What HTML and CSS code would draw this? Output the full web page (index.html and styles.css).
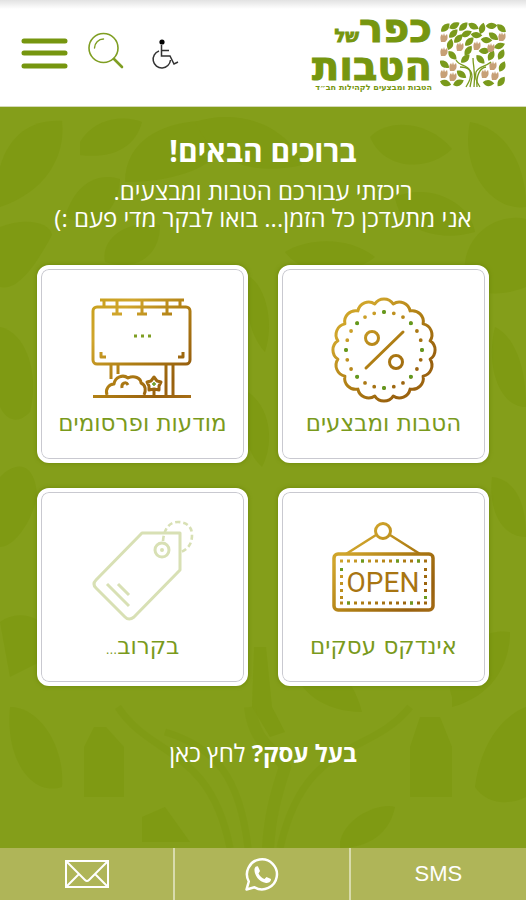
FILE: index.html
```html
<!DOCTYPE html>
<html lang="he" dir="rtl">
<head>
  <meta charset="UTF-8">
  <meta name="viewport" content="width=device-width, initial-scale=1.0">
  <title>כפר של הטבות</title>
  <link rel="stylesheet" href="styles.css">
</head>
<body>
  <header class="header">
    <a class="logo" href="#">
      <svg class="logo-tree" viewBox="0 0 66 66" aria-hidden="true">
        <defs>
          <path id="leaf" d="M-4 3.500C-4-2-1-4.500 4.500-4.500C4.500 1 2 4.500-4 3.500Z"/>
          <path id="hand" d="M-3 4C-4 0-4-2-2-4L-1-2L0-5L1-2L3-4C4-1 4 2 1 4Z"/>
        </defs>
        <g fill="#7a9a1c">
          <use href="#leaf" x="5" y="6"/><use href="#leaf" x="14" y="4" transform="rotate(15 14 4)"/>
          <use href="#leaf" x="23" y="5"/><use href="#leaf" x="33" y="4" transform="rotate(70 33 4)"/>
          <use href="#leaf" x="42" y="7" transform="rotate(-30 42 7)"/><use href="#leaf" x="51" y="4" transform="rotate(40 51 4)"/>
          <use href="#leaf" x="61" y="6" transform="rotate(85 61 6)"/><use href="#leaf" x="13" y="12"/>
          <use href="#leaf" x="26" y="12" transform="rotate(20 26 12)"/><use href="#leaf" x="36" y="13" transform="rotate(50 36 13)"/>
          <use href="#leaf" x="18" y="17"/><use href="#leaf" x="53" y="14" transform="rotate(80 53 14)"/>
          <use href="#leaf" x="10" y="23" transform="rotate(-30 10 23)"/><use href="#leaf" x="29" y="20"/>
          <use href="#leaf" x="46" y="18" transform="rotate(50 46 18)"/><use href="#leaf" x="59" y="24" transform="rotate(25 59 24)"/>
          <use href="#leaf" x="28" y="29" transform="rotate(-10 28 29)"/><use href="#leaf" x="44" y="29" transform="rotate(40 44 29)"/>
          <use href="#leaf" x="61" y="33" transform="rotate(-20 61 33)"/><use href="#leaf" x="12" y="33" transform="rotate(90 12 33)"/>
          <use href="#leaf" x="4" y="42" transform="rotate(80 4 42)"/><use href="#leaf" x="51" y="34" transform="rotate(-20 51 34)"/>
          <use href="#leaf" x="25" y="37"/><use href="#leaf" x="40" y="37" transform="rotate(90 40 37)"/>
          <use href="#leaf" x="62" y="45" transform="rotate(-20 62 45)"/><use href="#leaf" x="21" y="52" transform="rotate(80 21 52)"/>
          <use href="#leaf" x="5" y="61" transform="rotate(60 5 61)"/><use href="#leaf" x="18" y="61" transform="rotate(20 18 61)"/>
          <use href="#leaf" x="48" y="61" transform="rotate(50 48 61)"/><use href="#leaf" x="61" y="60" transform="rotate(-10 61 60)"/>
        </g>
        <g fill="#c7a077">
          <use href="#hand" x="4" y="16"/><use href="#hand" x="20" y="25"/><use href="#hand" x="4" y="30"/>
          <use href="#hand" x="37" y="24"/><use href="#hand" x="51" y="26"/><use href="#hand" x="62" y="15"/>
          <use href="#hand" x="13" y="45"/><use href="#hand" x="4" y="52"/><use href="#hand" x="13" y="55"/>
          <use href="#hand" x="53" y="44"/><use href="#hand" x="45" y="52"/><use href="#hand" x="55" y="54"/>
        </g>
        <g fill="none" stroke="#7a9a1c" stroke-width="1.3">
          <path d="M16 38C20 45 27 42 30 49C32 55 29 60 26 65"/>
          <path d="M20 45C28 45 32 48 32 55L30 65"/>
          <path d="M33 36C33 46 36 49 34 65"/>
          <path d="M51 40C45 45 39 44 36 50C34 57 38 62 40 65"/>
          <path d="M46 45C40 46 36 53 37 65"/>
        </g>
      </svg>
      <span class="logo-text">
        <span class="logo-line">כפר<small class="logo-of">של</small></span>
        <span class="logo-line">הטבות</span>
        <span class="logo-tagline">הטבות ומבצעים לקהילות חב״ד</span>
      </span>
    </a>
    <div class="tools">
      <button class="tool" type="button" aria-label="נגישות">
        <svg width="44" height="32" viewBox="-7 0 44 32" fill="none" stroke="#333" stroke-width="1.5">
          <circle cx="11" cy="4" r="2.6" fill="#000" stroke="none"/>
          <path d="M10.500 7V18H19L23 26L27 24M11 12.500H18"/>
          <path d="M8 13A8.700 8.700 0 1 0 19.500 22"/>
        </svg>
      </button>
      <button class="tool" type="button" aria-label="חיפוש">
        <svg width="36" height="38" viewBox="0 0 36 38" fill="none" stroke="#7f9e22" stroke-linecap="round">
          <circle cx="15.500" cy="16" r="14.500" stroke-width="1.600"/>
          <path d="M6.500 16A9 9 0 0 1 15.500 7" stroke-width="1.400"/>
          <path d="M26 27L34 35" stroke-width="2.600"/>
        </svg>
      </button>
      <button class="tool" type="button" aria-label="תפריט">
        <svg width="48" height="34" viewBox="0 0 48 34" stroke="#76960f" stroke-width="5" stroke-linecap="round">
          <path d="M4 5H45M4 17H45M4 30H45"/>
        </svg>
      </button>
    </div>
  </header>

  <main class="main">
    <svg class="leaves" viewBox="0 0 526 741" preserveAspectRatio="xMidYMid slice" aria-hidden="true">
      <g fill="#7f9a12">
        <path d="M0 60C10 25 35 12 62 14C66 50 45 85 0 100Z"/>
        <path d="M80 35C95 10 125 8 142 15C135 42 110 52 80 48Z"/>
        <path d="M125 75C125 30 170 8 230 15C235 50 190 75 125 75Z"/>
        <path d="M195 15C240 0 290 20 302 58C260 68 215 60 195 15Z"/>
        <path d="M370 30C390 10 430 15 452 42C430 64 385 65 370 30Z"/>
        <path d="M470 15C500 20 526 50 526 100C490 105 460 60 470 15Z"/>
        <path d="M65 110C75 75 100 65 120 72C118 105 95 125 65 110Z"/>
        <path d="M105 155C100 130 130 112 160 118C160 150 135 165 105 155Z"/>
        <path d="M395 90C430 75 470 95 475 125C440 135 400 125 395 90Z"/>
        <path d="M465 170C460 130 495 105 526 112V180C500 190 475 190 465 170Z"/>
        <path d="M0 120C25 110 50 115 52 128C40 150 20 185 0 180Z"/>
        <path d="M285 145C310 130 350 130 375 150C350 170 305 172 285 145Z"/>
        <path d="M0 220C25 225 40 265 30 305C15 320 5 310 0 300Z"/>
        <path d="M495 220C515 230 526 260 526 300C500 300 485 260 495 220Z"/>
        <path d="M250 170C265 180 275 215 265 245C250 230 242 195 250 170Z"/>
        <path d="M248 285C270 300 275 335 262 360C245 345 240 315 248 285Z"/>
        <path d="M0 370C20 350 36 360 37 390C30 420 12 440 0 440Z"/>
        <path d="M492 370C512 372 526 390 526 430C500 430 488 400 492 370Z"/>
        <path d="M0 515C20 500 50 510 60 545L10 570Z"/>
        <path d="M78 530C105 515 128 535 122 572C95 580 75 560 78 530Z"/>
        <path d="M172 535C185 520 205 540 215 575L172 570Z"/>
        <path d="M290 550C320 545 350 560 362 605C325 605 295 585 290 550Z"/>
        <path d="M385 550C405 520 430 525 428 545C420 570 400 575 385 565Z"/>
        <path d="M452 590C440 550 480 520 510 525C510 560 490 590 452 600Z"/>
        <path d="M10 600C40 600 65 640 62 680C30 690 5 650 10 600Z"/>
        <path d="M84 640L94 620H106L124 640V690H84Z"/>
        <path d="M410 640L420 610H440L452 640V690H410Z"/>
        <path d="M475 680C480 640 500 610 526 600V690C505 700 485 695 475 680Z"/>
        <path d="M254 540H266L272 600L285 625L270 630L252 600Z"/>
        <path d="M142 710L165 700L190 735H142Z"/>
        <path d="M340 735C345 710 380 695 395 700C390 725 370 741 340 741Z"/>
      </g>
      <g class="branches" fill="none" stroke="#7f9a12" stroke-width="7">
        <path d="M118 600C150 650 210 640 230 741"/>
        <path d="M165 625C215 640 240 670 248 741"/>
        <path d="M410 600C370 650 305 630 280 741"/>
        <path d="M250 600C255 640 275 640 285 660C275 690 270 710 268 741" stroke-width="12"/>
      </g>
    </svg>

    <h1 class="title">ברוכים הבאים!</h1>
    <p class="intro">ריכזתי עבורכם הטבות ומבצעים.<br>אני מתעדכן כל הזמן... בואו לבקר מדי פעם :)</p>

    <nav class="tiles">
      <a class="tile" href="#">
        <svg class="tile-icon" viewBox="0 0 110 110" fill="none" stroke="url(#gold)" stroke-width="3" stroke-linecap="round" stroke-linejoin="round">
          <defs>
            <linearGradient id="gold" gradientUnits="userSpaceOnUse" x1="5" y1="5" x2="105" y2="105">
              <stop offset="0" stop-color="#c8a01c"/>
              <stop offset="0.200" stop-color="#d0a52c"/>
              <stop offset="0.500" stop-color="#b07f14"/>
              <stop offset="0.800" stop-color="#98600e"/>
              <stop offset="1" stop-color="#a86f16"/>
            </linearGradient>
          </defs>
          <path d="M45.800 8.900A11 11 0 0 1 64.200 8.900A11 11 0 0 1 81.100 15.900A11 11 0 0 1 94.100 28.900A11 11 0 0 1 101.100 45.800A11 11 0 0 1 101.100 64.200A11 11 0 0 1 94.100 81.100A11 11 0 0 1 81.100 94.100A11 11 0 0 1 64.200 101.100A11 11 0 0 1 45.800 101.100A11 11 0 0 1 28.900 94.100A11 11 0 0 1 15.900 81.100A11 11 0 0 1 8.900 64.200A11 11 0 0 1 8.900 45.800A11 11 0 0 1 15.900 28.900A11 11 0 0 1 28.900 15.900A11 11 0 0 1 45.800 8.900Z"/>
          <circle cx="55" cy="55" r="38" pathLength="24" stroke-width="3.800" stroke-dasharray="0 1"/>
          <circle cx="55" cy="55" r="38" pathLength="24" stroke="#5f9a20" stroke-width="4" stroke-dasharray="0 3"/>
          <circle cx="43" cy="43" r="6.500"/>
          <circle cx="67" cy="67" r="6.500"/>
          <path d="M37 73L74 37"/>
        </svg>
        <span class="tile-label">הטבות ומבצעים</span>
      </a>
      <a class="tile" href="#">
        <svg class="tile-icon" viewBox="0 0 110 110" fill="none" stroke="url(#gold)" stroke-width="3" stroke-linejoin="round">
          <rect x="5" y="12" width="97" height="57" rx="4"/>
          <path d="M12 5H96M16 5V12M92 5V12M29 5V18M54 5V18M79 5V18M24 19H34M49 19H59M74 19H84"/>
          <path d="M13 57V62H18M95 57V62H90"/>
          <path d="M23 69V84M30 69V79M78 69V101M85 69V101"/>
          <path d="M5 101.500H103"/>
          <path d="M19 100C17 94 21 89 26 89C27 82 35 79 40 83C46 80 53 83 53 88C58 90 58 96 56 100"/>
          <path d="M34 93C33 88 38 86 40 90"/>
          <path d="M66 82L69 86L73 87L71 91L71 95L66 94L61 95L61 91L59 87L63 86ZM66 94V101"/>
          <path d="M64 89H68M66 87V91" stroke="#6a9a20" stroke-width="1.500"/>
          <path d="M46 41H49M53 41H56M60 41H63" stroke="#7f9e22"/>
        </svg>
        <span class="tile-label">מודעות ופרסומים</span>
      </a>
      <a class="tile" href="#">
        <svg class="tile-icon" viewBox="0 0 110 110" fill="none" stroke="url(#gold)" stroke-width="3.500" stroke-linejoin="round">
          <circle cx="54" cy="13" r="7.500" stroke-width="3"/>
          <path d="M47 17L17 36M61 17L91 36" stroke-width="2.600"/>
          <rect x="5" y="36" width="99" height="56" rx="4"/>
          <path d="M11 43H98M11 85H98" stroke-width="3" stroke-dasharray="3 4"/>
          <path d="M12.500 50V82M96.500 50V82" stroke-width="3" stroke-dasharray="3 4"/>
          <path d="M32 43H35M67 43H70M88 43H91M11 51.500H14M95 79.500H98M18 85H21M81 85H84" stroke="#6a9a20" stroke-width="3"/>
          <text class="open" x="54" y="74" direction="ltr">OPEN</text>
        </svg>
        <span class="tile-label">אינדקס עסקים</span>
      </a>
      <a class="tile" href="#">
        <svg class="tile-icon" viewBox="0 0 110 110" fill="none" stroke="#d8e0b4" stroke-width="3" stroke-linejoin="round">
          <path d="M54 15H92V52L46 99Q41 103 37 99L8 70Q4 66 8 62Z"/>
          <circle cx="74" cy="32" r="7"/>
          <circle cx="74" cy="32" r="1" stroke-width="2"/>
          <path d="M75 23C76 10 82 4 90 4C99 4 104 9 104 17C104 26 100 31 93 34" stroke-width="2.600" stroke-dasharray="5 3"/>
          <path d="M19 66L41 88M30 66L41 77"/>
        </svg>
        <span class="tile-label">בקרוב<small class="dots">...</small></span>
      </a>
    </nav>

    <a class="owner" href="#"><strong>בעל עסק?</strong> לחץ כאן</a>
  </main>

  <footer class="contact">
    <a class="contact-link" href="#">SMS</a>
    <a class="contact-link" href="#" aria-label="WhatsApp">
      <svg width="34" height="34" viewBox="0 0 34 34">
        <path d="M1.500 32.500L3.800 24.500A15 15 0 1 1 9.500 30.300Z" fill="none" stroke="#fff" stroke-width="2.500" stroke-linejoin="round"/>
        <path d="M9.500 12C10 9.500 12 9 13 9.500L15 14L13.500 16.500C15 19.500 17 21 19.500 22L21.500 20L26 22C26 25 23.500 26 21 26C14 25 9 18 9.500 12Z" fill="#fff"/>
      </svg>
    </a>
    <a class="contact-link" href="#" aria-label="דואר אלקטרוני">
      <svg width="44" height="28" viewBox="0 0 44 28" fill="none" stroke="#fff" stroke-width="2">
        <path d="M1 1H43V27H1ZM1 1L20 20Q22 22 24 20L43 1M1 27L14 14M43 27L30 14"/>
      </svg>
    </a>
  </footer>
</body>
</html>
```
FILE: styles.css
```css
*{
  box-sizing: border-box;
}
body{
  margin: 0;
  min-height: 100vh;
  display: flex;
  flex-direction: column;
  background: #849e1a;
  font-family: "Open Sans", "Noto Sans", sans-serif;
}
a{
  color: inherit;
  text-decoration: none;
}
.header{
  display: flex;
  justify-content: space-between;
  align-items: center;
  height: 107px;
  padding: 4px 20px 0;
  background: linear-gradient(#e2e2e2, #fff 9px);
  border-bottom: 1px solid #d5dab8;
}
.logo{
  display: flex;
  align-items: center;
  gap: 8px;
  color: #76960f;
}
.logo-tree{
  width: 66px;
  height: 66px;
}
.logo-text{
  display: flex;
  flex-direction: column;
  padding-bottom: 4px;
}
.logo-line{
  display: flex;
  align-items: baseline;
  font-family: "DejaVu Sans", sans-serif;
  font-size: 40px;
  font-weight: bold;
  line-height: 30px;
  -webkit-text-stroke: 1px #76960f;
}
.logo-of{
  font-size: 18px;
}
.logo-tagline{
  padding-top: 2px;
  font-family: "DejaVu Sans", sans-serif;
  font-size: 8px;
  font-weight: bold;
  line-height: 10px;
}
.tools{
  display: flex;
  align-items: flex-end;
  gap: 20px;
  margin-bottom: 8px;
}
.tool{
  padding: 0;
  border: 0;
  background: none;
  cursor: pointer;
}
.tool svg{
  display: block;
}
.main{
  position: relative;
  flex: 1;
  padding: 24px 37px;
  color: #fff;
  text-align: center;
}
.leaves{
  position: absolute;
  top: 0;
  left: 0;
  width: 100%;
  height: 100%;
  opacity: 0.8;
}
.branches{
  opacity: 0.6;
}
.title, .intro, .tiles, .owner{
  position: relative;
}
.title{
  margin: 0;
  font-size: 30px;
  line-height: 40px;
}
.intro{
  margin: 6px 0 34px;
  font-size: 24px;
  line-height: 27px;
}
.tiles{
  display: grid;
  grid-template-columns: 1fr 1fr;
  gap: 25px 30px;
}
.tile{
  display: flex;
  flex-direction: column;
  align-items: center;
  height: 198px;
  padding-top: 26px;
  border: 4px solid #fff;
  border-radius: 12px;
  background: #fff;
  box-shadow: inset 0 0 0 1px #c9c9d0, 0 0 4px #6c8608;
  color: #7a9a1c;
}
.tile-icon{
  width: 110px;
  height: 110px;
}
.tile-label{
  font-family: "DejaVu Sans", sans-serif;
  font-size: 23px;
  line-height: 36px;
}
.dots{
  font-size: 12px;
}
.open{
  fill: #a87512;
  stroke: none;
  font-family: Roboto, sans-serif;
  font-size: 28px;
  text-anchor: middle;
}
.owner{
  display: inline-block;
  margin-top: 52px;
  font-size: 24px;
  line-height: 30px;
}
.contact{
  display: grid;
  grid-template-columns: repeat(3, 1fr);
  height: 52px;
  background: #afb558;
  color: #fff;
  font-family: "Liberation Sans", sans-serif;
  font-size: 22px;
}
.contact-link{
  display: flex;
  justify-content: center;
  align-items: center;
}
.contact-link + .contact-link{
  border-right: 2px solid #d8dbac;
}
```
